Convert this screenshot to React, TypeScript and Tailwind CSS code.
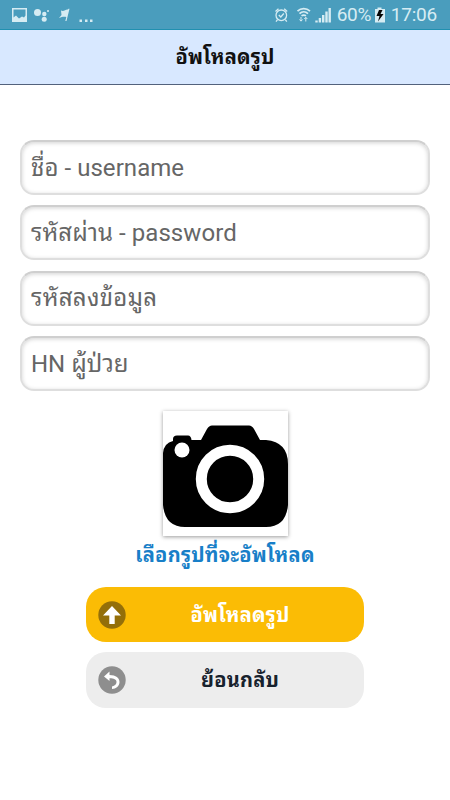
import React from 'react';

type ButtonProps = {
    label: string;
    className: string;
    icon: React.ReactNode;
};

const fields = [
    { name: 'username', label: 'ชื่อ - username', tracking: 'tracking-[0.050px]' },
    { name: 'password', label: 'รหัสผ่าน - password', tracking: 'tracking-[0.070px]' },
    { name: 'code', label: 'รหัสลงข้อมูล', tracking: 'tracking-[0.300px]' },
    { name: 'hn', label: 'HN ผู้ป่วย', tracking: 'tracking-normal' }
];

function StatusBar() {
    return (
        <div className="flex h-[30px] items-center justify-between border-b border-[#2190b0] bg-[#4a9dbd] pl-3 pr-[13px] text-[#d6ecf3]">
            <svg width="84" height="30" viewBox="0 0 84 30" fill="currentColor">
                <path fillRule="evenodd" d="M0 8h15v14H0zM1.5 9.500v8L4 15.500l3 3 3-2 2 1 1.500-2v-6z" />
                <circle cx="25.500" cy="12.500" r="3.500" />
                <circle cx="32.300" cy="14" r="2.200" />
                <circle cx="36" cy="11" r="1" />
                <circle cx="32.200" cy="19.300" r="2.500" />
                <path d="M49 10.500c3 1.500 4.500-1.500 7-1l.5-.7h1L54.500 21h-1.200l1-4c-2-.5-4-.5-7.300 1l2.500-3z" />
                <path d="M67.500 19.500H70V22h-2.500zM73 19.500h2.500V22H73zM78 19.500h2.500V22H78z" />
            </svg>
            <div className="flex items-center">
                <svg width="59" height="30" viewBox="0 0 59 30" fill="none" stroke="currentColor" strokeWidth="1.300">
                    <circle cx="6.300" cy="15.300" r="5.300" />
                    <path d="M.5 11.500L3.500 8.800M12.200 11.500L9.200 8.800M3.800 15l2 2 3-3.500M2.500 19.700l-1.500 2M10.300 19.700l1.500 2" />
                    <path d="M22.500 11.200c3.500-3.500 9-3.500 12.500 0M24.500 13.700c2.500-2.500 6-2.500 8.500 0M26.500 15.900c1.500-1 3-1 4.500 0" strokeWidth="1.700" />
                    <path d="M26 17v4M24.500 19.500l1.500 1.700 1.500-1.700M30.800 21.500v-4M29.300 19l1.500-1.700 1.500 1.700" strokeWidth="1" />
                    <path d="M41.500 20.500v2M44.900 18v4.500M48.200 15v7.500M51.500 11.500v11M54.700 8v14.500" strokeWidth="2.400" />
                </svg>
                <span className="ml-[3px] w-[38px] whitespace-nowrap text-[19px] leading-[30px] tracking-[-0.300px]">60%</span>
                <svg className="-ml-px" width="12" height="30" viewBox="0 0 12 30">
                    <path fill="currentColor" d="M3.500 7.500h4v1.500H11V22.500H1V9h2.500z" />
                    <path fill="#050505" d="M5 10L2.500 16h3L4 21.500 9.500 14h-3L8.500 10z" />
                </svg>
                <span className="ml-[5px] text-[19px] leading-[30px] tracking-[-0.200px]">17:06</span>
            </div>
        </div>
    );
}

function MenuButton({ label, className, icon }: ButtonProps) {
    return (
        <button type="button" className={`flex w-[278px] items-center rounded-[20px] pl-3 text-[20px] font-bold ${className}`}>
            {icon}
            <span className="flex-1 pr-[10px] text-center tracking-[0.200px]">{label}</span>
        </button>
    );
}

export default function App() {
    return (
        <div className="min-h-[800px] w-[450px] bg-white font-[Roboto,'Noto_Sans_Thai_Looped','Noto_Looped_Thai',Loma,Garuda,Waree,Umpush,'Droid_Sans_Thai',sans-serif]">
            <StatusBar />
            <header className="flex h-[55px] items-center justify-center border-b border-[#53627c] bg-[#d8e8ff]">
                <h1 className="text-[20px] font-bold tracking-[0.200px] text-[#111]">อัพโหลดรูป</h1>
            </header>
            <main className="flex flex-col items-center px-5 pt-[55px]">
                <form className="flex w-full flex-col gap-[10.400px]">
                    {fields.map((field) => (
                        <input
                            key={field.name}
                            name={field.name}
                            placeholder={field.label}
                            className={`h-[55px] w-full rounded-[14px] border-2 border-[#dedede] border-t-[#cfcfcf] bg-white px-[9px] text-[24px] shadow-[inset_0_1px_4px_rgba(0,0,0,0.18)] placeholder:text-[#666] ${field.tracking}`}
                        />
                    ))}
                </form>
                <div className="mt-[20px] size-[125px] bg-white shadow-[0_1px_4px_rgba(0,0,0,0.4)]">
                    <svg width="125" height="125" viewBox="0 0 125 125">
                        <path d="M0 42Q1 32 10 30V28Q10 24.500 14 24.500H25Q28 24.500 28.500 29H38L44 18Q46 14.500 49 14.500H86Q89 14.500 91 18L97 29H103Q125 31 125 53V94Q123 116 103 116H22Q2 116 0 94Z" />
                        <circle cx="19" cy="39" r="7.500" fill="white" />
                        <circle cx="67" cy="68" r="28.700" fill="none" stroke="white" strokeWidth="11" />
                    </svg>
                </div>
                <p className="mt-1 h-[30px] text-[20px] font-bold leading-[30px] tracking-[0.250px] text-[#187fc8]">เลือกรูปที่จะอัพโหลด</p>
                <div className="mt-[17px] flex flex-col gap-[10px]">
                    <MenuButton
                        label="อัพโหลดรูป"
                        className="h-[55px] bg-[#fbbc05] text-white"
                        icon={
                            <svg width="28" height="28" viewBox="0 0 28 28">
                                <circle cx="14" cy="14" r="13.700" fill="#946f09" />
                                <path fill="white" d="M14 5L23 14.500H16.700V23H11.300V14.500H5Z" />
                            </svg>
                        }
                    />
                    <MenuButton
                        label="ย้อนกลับ"
                        className="h-[56px] bg-[#ededed] text-[#17222d]"
                        icon={
                            <svg width="28" height="28" viewBox="0 0 28 28">
                                <circle cx="14" cy="14" r="13.700" fill="#8e8e8e" />
                                <path fill="white" d="M6 10.500L11.500 5.500V9C18 9 21.500 12 21.500 16C21.500 20 18 23 14 23V20.500C17 19.500 18.500 18 18.500 16C18.500 13.500 16 12.300 11.500 12.300V15Z" />
                            </svg>
                        }
                    />
                </div>
            </main>
        </div>
    );
}
